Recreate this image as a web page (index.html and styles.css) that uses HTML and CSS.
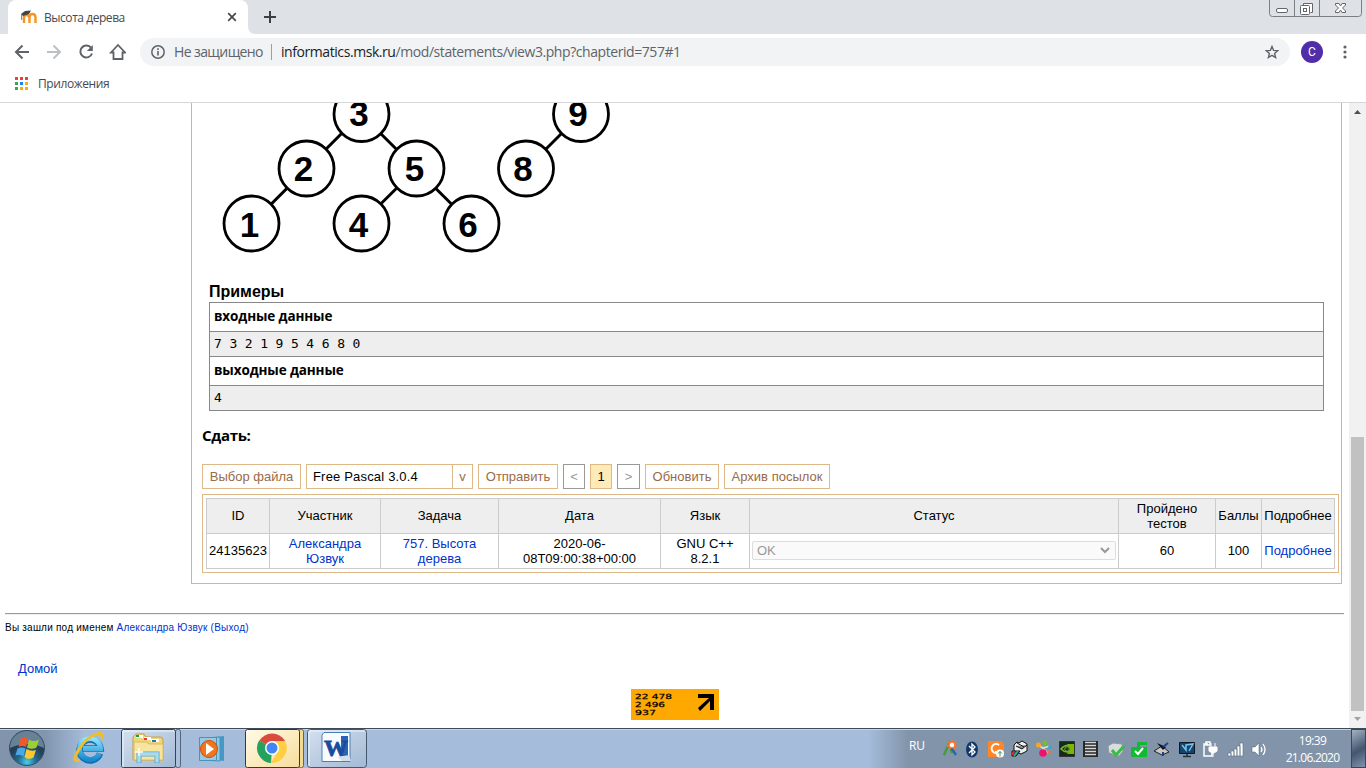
FILE: index.html
```html
<!DOCTYPE html>
<html lang="ru">
<head>
<meta charset="utf-8">
<title>Высота дерева</title>
<link rel="stylesheet" href="styles.css">
</head>
<body>
<header class="tabstrip">
  <div class="tab">
    <svg class="favicon" width="16" height="14" viewBox="0 0 16 14"><path d="M3 13V7.500Q3 5 5.500 5T8.500 7.500V13M8.500 13V7.500Q8.500 4 11.500 4T14.500 7.500V13" fill="none" stroke="#f7941e" stroke-width="2.400"/><path d="M0 4l4-3 6-.5-2 3.500-6 2z" fill="#444"/><path d="M.7 4v6" stroke="#777"/></svg>
    <span class="tab-title">Высота дерева</span>
    <svg class="tab-close" width="10" height="10" viewBox="0 0 10 10"><path d="M1.200 1.200l7.600 7.600M8.800 1.200L1.200 8.800" stroke="#45494d" stroke-width="1.700"/></svg>
  </div>
  <svg class="flare" width="8" height="34" viewBox="0 0 8 34"><path d="M0 26q0 8 8 8H0z" fill="#fff"/></svg>
  <svg class="newtab" width="12" height="12" viewBox="0 0 12 12"><path d="M6 0v12M0 6h12" stroke="#3c4043" stroke-width="2"/></svg>
  <svg class="window-buttons" width="94" height="18" viewBox="0 0 94 18"><g fill="none" stroke="#7b7e83"><path d="M.5 0v13.500q0 3 3 3h86q3 0 3-3V0M25.500 0v16.500M50.500 0v16.500" /><g stroke="#62666b"><rect x="7.500" y="8.500" width="11" height="4" rx="1.500" fill="#fff"/><path d="M34.500 5.500v-2h9v9h-2" fill="#fff"/><rect x="31.500" y="5.500" width="9" height="9" rx="1" fill="#fff"/><rect x="34.500" y="8.500" width="3" height="3"/></g><path d="M66.500 3.500h3.500l1.500 2.500 1.500-2.500h3.500v1.500l-3 3 3 3v1.500H73l-1.500-2.500-1.500 2.500h-3.500V11l3-3-3-3z" fill="#fff" stroke="#62666b"/></g></svg>
</header>
<nav class="navbar">
  <svg width="126" height="20" viewBox="0 0 126 20" fill="none" stroke="#5f6368" stroke-width="2"><path d="M29 10H16m6.500-6.500L16 10l6.500 6.500"/><path d="M47 10h13M53.500 3.500L60 10l-6.500 6.500" stroke="#bdc0c3"/><path d="M91.200 6A6 6 0 1 0 92 11.500"/><path d="M92.800 3v6h-6z" fill="#5f6368" stroke="none"/><path d="M111 10.500h2.500V17h9v-6.500h2.500L118 3z" stroke-width="1.800"/></svg>
  <div class="omnibox">
    <svg width="14" height="14" viewBox="0 0 14 14"><circle cx="7" cy="7" r="6.200" fill="none" stroke="#5f6368" stroke-width="1.500"/><path d="M7 6v4.500M7 3.300v1.600" stroke="#5f6368" stroke-width="1.600"/></svg>
    <span class="insecure">Не защищено</span>
    <span class="separator"></span>
    <span class="url"><span class="host">informatics.msk.ru</span>/mod/statements/view3.php?chapterid=757#1</span>
    <svg class="star" width="14" height="14" viewBox="0 0 14 14"><path d="M7 1.500l1.600 3.900 4.200.3-3.200 2.700 1 4.100L7 10.300l-3.600 2.200 1-4.100L1.200 5.700l4.200-.3z" fill="none" stroke="#5f6368" stroke-width="1.400"/></svg>
  </div>
  <span class="avatar">C</span>
  <svg class="kebab" width="4" height="14" viewBox="0 0 4 14" fill="#5f6368"><circle cx="2" cy="2" r="1.600"/><circle cx="2" cy="7" r="1.600"/><circle cx="2" cy="12" r="1.600"/></svg>
</nav>
<div class="bookmarks">
  <svg width="13" height="13" viewBox="0 0 13 13"><path d="M0 0h3v3H0zM5 0h3v3H5zM10 0h3v3h-3z" fill="#ea4335"/><path d="M0 5h3v3H0zM0 10h3v3H0z" fill="#34a853"/><path d="M5 5h3v3H5z" fill="#1a82f7"/><path d="M10 5h3v3h-3zM5 10h3v3H5zM10 10h3v3h-3z" fill="#fbac05"/></svg>
  <span>Приложения</span>
</div>
<div class="viewport">
  <main class="page">
    <section class="statement">
      <svg class="tree" width="420" height="160" viewBox="200 103 420 160">
        <path d="M361 114L252 223.500M361 114l110 109.500M416 169l-55 54.500M581 114l-55 55" fill="none" stroke="#000" stroke-width="3"/>
        <g fill="#fff" stroke="#000" stroke-width="2.800"><circle cx="361.500" cy="114" r="27.500"/><circle cx="306.500" cy="168.500" r="27.500"/><circle cx="416.500" cy="168.500" r="27.500"/><circle cx="251.500" cy="223.500" r="27.500"/><circle cx="361.500" cy="223.500" r="27.500"/><circle cx="471.500" cy="223.500" r="27.500"/><circle cx="526" cy="168.500" r="27.500"/><circle cx="581" cy="114" r="27.500"/></g>
        <g class="tree-label"><text x="359" y="126">3</text><text x="303.500" y="181">2</text><text x="414.500" y="181">5</text><text x="249.500" y="236.500">1</text><text x="358.500" y="236.500">4</text><text x="468" y="236.500">6</text><text x="523" y="181">8</text><text x="578" y="126">9</text></g>
      </svg>
      <h2 class="examples-title">Примеры</h2>
      <div class="examples">
        <div class="sample-head">входные данные</div>
        <pre class="sample">7 3 2 1 9 5 4 6 8 0</pre>
        <div class="sample-head output-head">выходные данные</div>
        <pre class="sample">4</pre>
      </div>
      <h3 class="submit-title">Сдать:</h3>
      <div class="controls">
        <span class="btn file">Выбор файла</span>
        <span class="lang"><span class="lang-name">Free Pascal 3.0.4</span><span class="lang-arrow">v</span></span>
        <span class="btn send">Отправить</span>
        <span class="btn pager">&lt;</span>
        <span class="btn current">1</span>
        <span class="btn pager next">&gt;</span>
        <span class="btn refresh">Обновить</span>
        <span class="btn archive">Архив посылок</span>
      </div>
      <div class="runs">
        <div class="cell head">ID</div><div class="cell head">Участник</div><div class="cell head">Задача</div><div class="cell head">Дата</div><div class="cell head">Язык</div><div class="cell head">Статус</div><div class="cell head two-line">Пройдено<br>тестов</div><div class="cell head">Баллы</div><div class="cell head">Подробнее</div>
        <div class="cell">24135623</div><div class="cell link two-line">Александра<br>Юзвук</div><div class="cell link two-line">757. Высота<br>дерева</div><div class="cell two-line">2020-06-<br>08T09:00:38+00:00</div><div class="cell two-line">GNU C++<br>8.2.1</div><div class="cell status"><span class="select">OK<svg width="10" height="7" viewBox="0 0 10 7"><path d="M1 1l4 4 4-4" fill="none" stroke="#999" stroke-width="2"/></svg></span></div><div class="cell">60</div><div class="cell">100</div><div class="cell link">Подробнее</div>
      </div>
    </section>
    <footer class="footer">
      <div class="login">Вы зашли под именем <span class="link">Александра Юзвук</span> <span class="link">(Выход)</span></div>
      <div class="home link">Домой</div>
      <svg class="counter" width="88" height="31" viewBox="0 0 88 31"><path fill="#ffa800" d="M0 0h88v31H0z"/><g class="counter-text"><text x="4" y="10" textLength="37" lengthAdjust="spacingAndGlyphs">22 478</text><text x="4" y="18" textLength="30" lengthAdjust="spacingAndGlyphs">2 496</text><text x="4" y="26" textLength="21" lengthAdjust="spacingAndGlyphs">937</text></g><path d="M67 5h16v16h-4v-9L69 22l-2-3 11-10H67z"/></svg>
    </footer>
  </main>
  <aside class="scrollbar">
    <svg width="17" height="17" viewBox="0 0 17 17"><path d="M5 11h7L8.500 7z" fill="#505050"/></svg>
    <div class="thumb"></div>
    <svg width="17" height="17" viewBox="0 0 17 17"><path d="M5 6h7l-3.500 4z" fill="#a3a3a3"/></svg>
  </aside>
</div>
<div class="taskbar">
  <svg class="launchers" width="370" height="40" viewBox="0 0 370 40">
    <defs>
      <radialGradient id="orb" cx="50%" cy="90%"><stop offset="0" stop-color="#46d0ef"/><stop offset=".5" stop-color="#246e91"/><stop offset="1" stop-color="#263e58"/></radialGradient>
      <linearGradient id="glass" x2="1" y2="1"><stop offset="0" stop-color="#d4e0ee"/><stop offset="1" stop-color="#a2b9d5"/></linearGradient>
      <linearGradient id="warm" x2="1" y2="1"><stop offset="0" stop-color="#fffbe8"/><stop offset="1" stop-color="#f7dc9b"/></linearGradient>
      <linearGradient id="ie" x2="0" y2="1"><stop offset="0" stop-color="#8be4ff"/><stop offset="1" stop-color="#168bd0"/></linearGradient>
      <linearGradient id="word" x2="1" y2="1"><stop offset="0" stop-color="#74b3ee"/><stop offset="1" stop-color="#123d89"/></linearGradient>
    </defs>
    <circle cx="27" cy="20" r="17.500" fill="url(#orb)" stroke="#33516e"/><path d="M10 20a17 17 0 0 1 34 0q-17-8-34 0" fill="#b7d2e0" opacity=".45"/>
    <path d="M20.500 11q4-3 7.500 0l-2 8q-4-2-7.500 0z" fill="#f05a28"/><path d="M29 11.500q5 3 10 0l-2.500 8q-5 2.500-9.500 0z" fill="#9bcf35"/><path d="M17.500 20.500q4-2 8 0l-2 8q-4-3-8-1z" fill="#4ca7e8"/><path d="M26.500 21q5 3 9.500 1l-2.500 7.500q-5 3-9-.5z" fill="#fcc72f"/>
    <path d="M100 25a11 11 0 1 1 1-7H84" fill="none" stroke="#176caf" stroke-width="0"/><path d="M100 25.500A10.500 10.500 0 1 1 100.500 20.500H83" fill="none" stroke="#176caf" stroke-width="6.500"/><path d="M99.500 25.500A10.500 10.500 0 1 1 100.500 20.500H83" fill="none" stroke="url(#ie)" stroke-width="5"/><path d="M80 32q-9 3-2-9Q86 9 98 5.500q6-1 3.500 5" fill="none" stroke="#f4bd22" stroke-width="2.800"/>
    <rect x="175.500" y="1.500" width="5" height="38" rx="2" fill="#a9bfda" stroke="#53657c"/><rect x="121.500" y="1.500" width="54" height="38" rx="2" fill="url(#glass)" stroke="#34435a"/><path d="M123 39V3h51" fill="none" stroke="#eff5fb"/>
    <path d="M133 32V9l3-3h8l2 3h14q3 0 3 3v20z" fill="#eed47c" stroke="#c59f42"/><path d="M136 10h7V7h-7zM144 12h7V9h-7zM151 14h8v-3h-8z" fill="#fff"/><path d="M136 8h3" stroke="#13a23b" stroke-width="2"/><path d="M144 11h3" stroke="#e33" stroke-width="2"/><path d="M152 13h4" stroke="#27c" stroke-width="2"/><path d="M134 32V14h12l3 2h14v16z" fill="#f7e49f" stroke="#d9bd68"/><path d="M139 35V26h18v9" fill="none" stroke="#59a5cb" stroke-width="5"/><path d="M139 34.500V26h18v8.500" fill="none" stroke="#a9dbee" stroke-width="3.400"/><path d="M139 20v8M135 24h8" stroke="#fff" stroke-width="1.300"/>
    <path d="M207 10l17-2v25l-17-2z" fill="#4599c6"/><path d="M203 10l17-1v24l-17-1z" fill="#8fcbe5" stroke="#4b91b8"/><path d="M199.500 9.500h17v23h-17z" fill="#96c9e6" stroke="#4b91b8"/><circle cx="209" cy="21" r="8.500" fill="#f0751b" stroke="#d54b0d"/><path d="M206 15l8 6-8 6z" fill="#fff"/>
    <rect x="298.500" y="1.500" width="5" height="38" rx="2" fill="#f4d990" stroke="#6a644d"/><rect x="245.500" y="1.500" width="54" height="38" rx="2" fill="url(#warm)" stroke="#38383a"/>
    <path d="M272 20L259.300 12.700A15 15 0 0 1 285 12.700z" fill="#d94c3d"/><path d="M272 20L259 12.500A15 15 0 0 0 271 35z" fill="#23a15d"/><path d="M272 20V13h13A15 15 0 0 1 271 35l7-12z" fill="#ffce42"/><circle cx="272" cy="20" r="7" fill="#fff"/><circle cx="272" cy="20" r="5.500" fill="#4285f4"/>
    <rect x="307.500" y="1.500" width="59" height="38" rx="3" fill="url(#glass)" stroke="#46566d"/><path d="M309 38V3h56" fill="none" stroke="#eff5fb"/><path d="M324 4.500h26v29h-28V7z" fill="#f7fbff" stroke="#4c7fb9"/><path d="M341 8h7v20h-7" fill="#2b62b4"/><text class="word-w" x="324" y="28" textLength="24" lengthAdjust="spacingAndGlyphs">W</text><path d="M338 29l11-2 2 6h-9z" fill="#d4deea"/>
  </svg>
  <span class="layout">RU</span>
  <svg class="tray" width="330" height="24" viewBox="0 0 330 24">
    <path d="M3 18l5-11 3 9" fill="none" stroke="#469c3c" stroke-width="2.500"/><path d="M9 9l6 9" stroke="#2469ba" stroke-width="2.500"/><path d="M11 2l1.500 3.500L16 4l-1.500 3.500L17 9l-3 1v3l-3-2-3 2v-3L5 9l3-2-2-3 3.500 1z" fill="#ff7628"/><circle cx="11" cy="8" r="2.200" fill="#fff"/>
    <ellipse cx="31" cy="12.500" rx="6" ry="8" fill="#12386b"/><path d="M28 9l6 6-3 3V7l3 3-6 6" fill="none" stroke="#fff" stroke-width="1.300"/>
    <path d="M47 4h13l3 3v13H47z" fill="#ff8526"/><path d="M58 8a4.500 4.500 0 1 0 0 7h-4" fill="none" stroke="#fff" stroke-width="2"/><circle cx="59" cy="16.500" r="4" fill="#fff"/><path d="M59 19.500v-5m-2 2l2-2 2 2" fill="none" stroke="#398a73"/>
    <path d="M73 8l3-3 2 1 3-2 5 3v7l-6 3-7-3zM75 9l6 3 5-4M76 6l7 4" fill="#eee" stroke="#111"/><path d="M71 14h8l-4 5h-4z" fill="#2545c9" stroke="#111"/><path d="M73 14l-2 4" stroke="#e52525" stroke-width="2"/><path d="M77 14l-4 5" stroke="#27b956" stroke-width="2"/>
    <path d="M97 8l5 3-1 6m1-6l7-2M102 11l5 5" stroke="#ddd" stroke-width="1.500" fill="none"/><circle cx="97.500" cy="8" r="2.500" fill="#f6a91d"/><circle cx="104" cy="6" r="2.500" fill="#77bd25"/><circle cx="109" cy="10" r="2" fill="#35a8d0"/><circle cx="102" cy="16" r="3.800" fill="#ec126d"/><circle cx="108" cy="15" r="1.800" fill="#ee7a2b"/>
    <path d="M118.500 4.500h15v15h-15z" fill="#172918" stroke="#333"/><path d="M120 12q6-7 12 0-6 6-12 0z" fill="none" stroke="#79b928" stroke-width="1.500"/><path d="M126 7h7v10h-7l3-5z" fill="#76b900"/><circle cx="126" cy="12" r="2.300" fill="#1e3b10" stroke="#9cc957" stroke-width=".7"/>
    <path d="M142 4h15v16h-15z" fill="#292929"/><path d="M144 5.500h11M144 8.500h11M144 11.500h11M144 14.500h11M144 17.500h11" stroke="#d4d4d4" stroke-width="1.500"/>
    <path d="M167 9l5-3 9 1 1 7-4 5-10-3z" fill="#d9dddd" stroke="#929a9d"/><path d="M171 13l4 5 8-9" fill="none" stroke="#36bd45" stroke-width="3"/>
    <path d="M190 10h6V5h10v3h-7v2h7v10h-16z" fill="#10bb31"/><path d="M194 14l3 3 5-6" fill="none" stroke="#fff" stroke-width="2"/>
    <path d="M213 14l8-5 7 6-7 3z" fill="#c8c8c4" stroke="#222"/><path d="M216 6l9 4-3 3z" fill="#111"/><path d="M222 10l5-4M222 15v4" stroke="#203f93" stroke-width="2"/>
    <path d="M238.500 5.500h15v11h-15z" fill="#15436e" stroke="#101820"/><path d="M241 8l4 5V8l7-1-4 7" stroke="#73c5ed" stroke-width="1.500" fill="none"/><path d="M246 17v3m-4-.5h8" stroke="#28313b" stroke-width="1.500" fill="none"/>
    <path d="M267 7h-4v12h8v-3M265 5h4v3h-4z" fill="none" stroke="#fff" stroke-width="1.500"/><path d="M268 10h8v4l-3 2h-2l-3-2zM270 10V6m4 4V6m-2 10v4" fill="#fff" stroke="#fff"/>
    <g fill="#fff" stroke="#596c82" stroke-width=".6"><path d="M287 16h3v3h-3zM290 14h3v5h-3zM293 12h3v7h-3zM296 9h3v10h-3zM299 6h3v13h-3z"/></g>
    <path d="M311 10h3l4-4v13l-4-4h-3z" fill="#fff" stroke="#4e5c6e" stroke-width=".5"/><path d="M320 10q2 2.500 0 5m2-8q4 5.500 0 11" fill="none" stroke="#fff" stroke-width="1.200"/>
  </svg>
  <div class="clock"><div>19:39</div><div class="date">21.06.2020</div></div>
  <span class="show-desktop"></span>
</div>
</body>
</html>
```
FILE: styles.css
```css
* { box-sizing: border-box; }
body { margin: 0; width: 1366px; height: 768px; overflow: hidden; background: #fff; color: #000; font: 13px/15px "Liberation Sans", sans-serif; display: flex; flex-direction: column; }
svg { display: block; flex: none; }
.tabstrip { height: 34px; background: #dee1e6; display: flex; align-items: flex-start; padding-left: 8px; font-family: "Open Sans", sans-serif; }
.tab { width: 240px; height: 34px; background: #fff; border-radius: 8px 8px 0 0; display: flex; align-items: center; padding: 0 11px 0 13px; }
.tab-title { margin-left: 7px; font-size: 12px; letter-spacing: -.45px; color: #45494d; }
.tab-close { margin-left: auto; }
.newtab { margin: 11px 0 0 8px; }
.window-buttons { margin-left: auto; margin-right: 3px; }
.navbar { height: 35px; display: flex; align-items: center; padding: 0 19px 0 14px; font-family: "Open Sans", sans-serif; font-size: 14px; }
.navbar > svg:first-child { margin-left: -14px; margin-right: 14px; }
.omnibox { width: 1150px; height: 28px; border-radius: 14px; background: #f1f3f4; display: flex; align-items: center; padding: 0 11px; color: #5f6368; white-space: nowrap; }
.insecure { width: 89px; margin-left: 9px; letter-spacing: -.6px; }
.separator { width: 1px; height: 16px; background: #9aa0a6; margin: 0 9px 0 8px; }
.url { letter-spacing: -.43px; }
.host { color: #202124; }
.star { margin-left: auto; }
.avatar { width: 22px; height: 22px; margin-left: 11px; border-radius: 50%; background: #512da8; color: #fff; font: 12px/22px Roboto, sans-serif; text-align: center; }
.kebab { margin-left: auto; }
.bookmarks { height: 34px; padding: 0 0 4px 15px; border-bottom: 1px solid #d5d7da; display: flex; align-items: center; gap: 10px; color: #45494d; font-family: "Open Sans", sans-serif; font-size: 12px; letter-spacing: -.4px; }
.viewport { height: 625px; display: flex; }
.page { width: 1349px; }
.statement { width: 1151px; height: 481px; margin-left: 191px; border: 1px solid #c3b9a5; border-top: 0; }
.tree { margin-left: 8px; }
.tree-label { font: bold 35px "Liberation Sans", sans-serif; text-anchor: middle; }
.examples-title { margin: 20px 0 2px 17px; font-size: 16px; line-height: 17px; }
.examples { width: 1115px; height: 109px; margin-left: 17px; border: 1px solid #888; }
.sample-head { height: 28px; padding-left: 4px; font: bold 13.500px/27px "Open Sans", sans-serif; letter-spacing: -.12px; }
.output-head { height: 28px; }
.sample { margin: 0; height: 26px; padding-left: 4px; background: #eee; border: solid #888; border-width: 1px 0; font: 13px/23px "DejaVu Sans Mono", monospace; letter-spacing: -.13px; }
.sample:last-child { height: 25px; border-bottom: 0; }
.submit-title { margin: 14px 0 19px 10px; font: bold 15px/20px "Open Sans", sans-serif; letter-spacing: -.3px; }
.controls { height: 25px; margin-left: 10px; display: flex; gap: 5px; line-height: 23px; }
.btn { border: 1px solid #deb887; color: #996b47; text-align: center; white-space: nowrap; }
.file { width: 99px; }
.lang { width: 167px; border: 1px solid #deb887; display: flex; }
.lang-name { flex: 1; padding-left: 6px; letter-spacing: .18px; }
.lang-arrow { width: 20px; border-left: 1px solid #deb887; text-align: center; color: #996b47; }
.send { width: 80px; }
.pager { width: 22px; border-color: #999; color: #999; }
.next { width: 23px; }
.current { width: 22px; background: #ffebb8; color: #000; }
.refresh { width: 74px; }
.archive { width: 106px; }
.runs { width: 1137px; height: 79px; margin: 5px 0 0 10px; border: 1px solid #deb887; padding: 3px; display: grid; grid-template-columns: 64px 111px 118px 162px 89px 369px 97px 46px 73px; grid-template-rows: 36px 35px; }
.cell { border: solid #ccc; border-width: 0 1px 1px 0; padding-bottom: 2px; display: flex; align-items: center; justify-content: center; text-align: center; white-space: nowrap; }
.cell.two-line { padding-bottom: 0; }
.cell.head { background: #eee; border-top-width: 1px; }
.cell:nth-child(9n+1) { border-left-width: 1px; }
.link { color: #03c; }
.select { width: 364px; height: 19px; border: 1px solid #ddd; border-radius: 2px; background: #fafafa; color: #999; display: flex; align-items: center; justify-content: space-between; padding: 0 5px 0 4px; }
.footer { height: 144px; margin: 29px 5px 0; border-top: 1px solid #999; box-shadow: inset 0 1px #eee; }
.login { padding-top: 7px; font-size: 10px; line-height: 14px; letter-spacing: .22px; white-space: nowrap; }
.home { margin: 26px 0 0 13px; }
.counter { margin: 13px 0 0 626px; }
.counter-text { font: 7px "DejaVu Sans", sans-serif; stroke: #000; stroke-width: .25px; }
.scrollbar { width: 17px; background: #f1f1f1; display: flex; flex-direction: column; }
.thumb { height: 274px; margin: auto 2px 0; background: #c1c1c1; }
.taskbar { height: 40px; border-top: 1px solid #3f4a59; box-shadow: inset 0 1px #c8d5e5; background: linear-gradient(90deg, #8194ac 0, #8195ae 45px, #a5bddb 85px, #a5bddb 868px, #8294aa 908px); color: #fff; display: flex; align-items: flex-start; font: 12px/17px "Open Sans", sans-serif; }
.launchers { margin-top: -1px; }
.word-w { font: bold 24px "Liberation Serif", serif; fill: #174b9b; stroke: #174b9b; stroke-width: .8px; }
.layout { margin: 8px 0 0 539px; width: 17px; letter-spacing: -.2px; }
.tray { margin: 8px 0 0 15px; }
.clock { margin-top: 3px; width: 80px; padding-left: 3px; text-align: center; letter-spacing: -.6px; }
.date { letter-spacing: -.75px; }
.show-desktop { margin-left: auto; width: 15px; height: 39px; border: 1px solid #39475a; background: linear-gradient(150deg, #a4b2c2, #43566f 55%, #8094ae); }
```
